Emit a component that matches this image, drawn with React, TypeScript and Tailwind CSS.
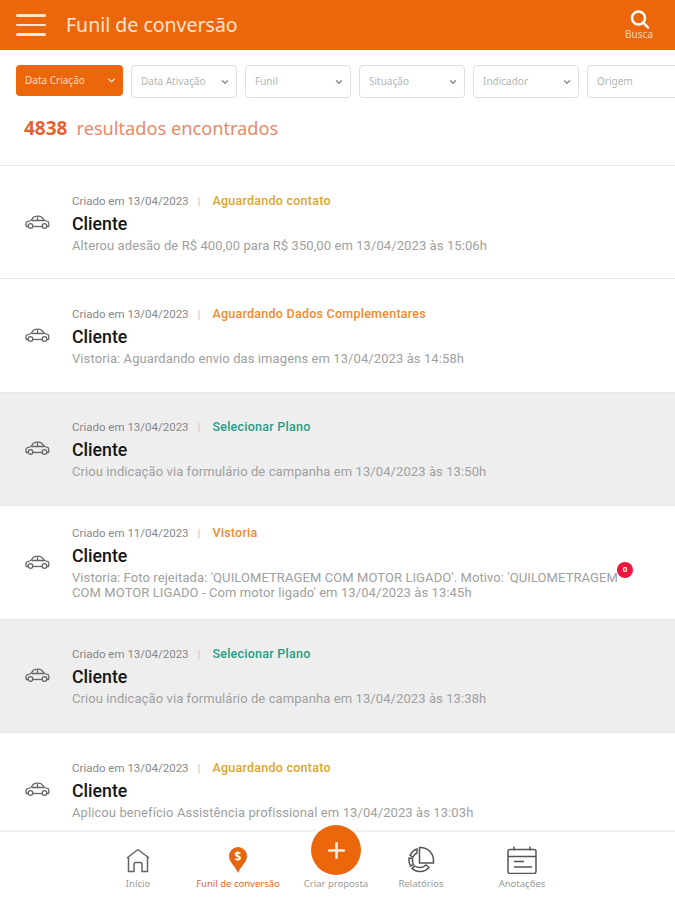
import type { ReactNode } from 'react';
import { ChevronDown, Plus } from 'lucide-react';

const ubuntu = "font-['Noto_Sans',sans-serif]";

interface Lead {
  date: string;
  status: string;
  statusClass: string;
  text: string;
  gray?: boolean;
  badge?: boolean;
}

const leads: Lead[] = [
  { date: '13/04/2023', status: 'Aguardando contato', statusClass: 'text-[#e0a526]', text: 'Alterou adesão de R$ 400,00 para R$ 350,00 em 13/04/2023 às 15:06h' },
  { date: '13/04/2023', status: 'Aguardando Dados Complementares', statusClass: 'text-[#f08a2c]', text: 'Vistoria: Aguardando envio das imagens em 13/04/2023 às 14:58h' },
  { date: '13/04/2023', status: 'Selecionar Plano', statusClass: 'text-[#1f9e86]', text: 'Criou indicação via formulário de campanha em 13/04/2023 às 13:50h', gray: true },
  { date: '11/04/2023', status: 'Vistoria', statusClass: 'text-[#f08a2c]', text: "Vistoria: Foto rejeitada: 'QUILOMETRAGEM COM MOTOR LIGADO'. Motivo: 'QUILOMETRAGEM COM MOTOR LIGADO - Com motor ligado' em 13/04/2023 às 13:45h", badge: true },
  { date: '13/04/2023', status: 'Selecionar Plano', statusClass: 'text-[#1f9e86]', text: 'Criou indicação via formulário de campanha em 13/04/2023 às 13:38h', gray: true },
  { date: '13/04/2023', status: 'Aguardando contato', statusClass: 'text-[#e0a526]', text: 'Aplicou benefício Assistência profissional em 13/04/2023 às 13:03h' },
];

const filters = ['Data Ativação', 'Funil', 'Situação', 'Indicador'];

function CarIcon() {
  return (
    <svg width="25" height="15" viewBox="0 0 25 15" fill="none" stroke="#666" strokeWidth="1.300">
      <path d="M3 11.500H1.500c-.8-1-.8-3.500.2-4.500L6 5.500 8.500 2c3-1 6-1 8 0l3 3.500 3.500 1c1 1 1 4 .5 5H22" />
      <path d="M8 11.500h9" />
      <path d="M7 5.500h12M12.500 2v3.500" />
      <circle cx="5.500" cy="11" r="2.300" />
      <circle cx="19.500" cy="11" r="2.300" />
    </svg>
  );
}

function LeadRow({ lead }: { lead: Lead }) {
  return (
    <div className={`relative h-[113.4px] flex items-center border-b border-[#e8e8e8] font-['Roboto',sans-serif] ${lead.gray ? 'bg-[#eeeeee]' : 'bg-white'}`}>
      <div className="w-[72px] shrink-0 pl-[25px]">
        <CarIcon />
      </div>
      <div className="flex-1 pr-[52px] pt-[1px]">
        <div className="flex items-center text-[11.500px] leading-[14px] pt-[1px]">
          <span className="text-[#888]">Criado em {lead.date}</span>
          <span className="ml-[9px] mr-[12px] text-[#c4c4c4]">|</span>
          <span className={`text-[12.500px] font-medium tracking-[0.25px] ${lead.statusClass}`}>{lead.status}</span>
        </div>
        <div className="text-[17.700px] leading-[22px] font-medium text-[#151515] mt-[5px]">Cliente</div>
        <div className="text-[13px] leading-[15px] text-[#a0a0a0] mt-[3px] tracking-[0.09px]">{lead.text}</div>
      </div>
      {lead.badge && (
        <div className="absolute left-[617px] top-[56px] w-[16px] h-[16px] rounded-full bg-[#f0153f] flex items-center justify-center text-[8px] font-bold text-white">0</div>
      )}
    </div>
  );
}

function NavItem({ label, active, icon, className }: { label: string; active?: boolean; icon: ReactNode; className?: string }) {
  return (
    <div className={`flex flex-col items-center w-[100px] ${className ?? ''}`}>
      <div className="h-[30px] flex items-center justify-center">{icon}</div>
      <span className={`text-[9.500px] mt-[3px] leading-[12px] whitespace-nowrap ${ubuntu} ${active ? 'text-[#e8662a]' : 'text-[#999]'}`}>{label}</span>
    </div>
  );
}

export default function App() {
  return (
    <div className="relative w-[675px] h-[900px] overflow-hidden bg-white">
      <header className="h-[50px] bg-[#ec670b] flex items-center pl-[16px] pr-[22px] text-white">
        <div className="flex flex-col gap-[7px] w-[30px]">
          <span className="h-[2.500px] bg-[#fde6d6] rounded" />
          <span className="h-[2.500px] bg-[#fde6d6] rounded" />
          <span className="h-[2.500px] bg-[#fde6d6] rounded" />
        </div>
        <h1 className={`ml-[20px] text-[19.500px] text-[#fde3d0] ${ubuntu}`}>Funil de conversão</h1>
        <div className="ml-auto self-start pt-[10px] flex flex-col items-center">
          <svg width="21" height="19" viewBox="0 0 21 19" fill="none" stroke="#fff" strokeWidth="2.500" strokeLinecap="round">
            <circle cx="9.500" cy="8" r="6.500" />
            <path d="M14.500 12.800 19 17.500" />
          </svg>
          <span className={`text-[10px] leading-[10px] text-[#fbd3b8] ${ubuntu}`}>Busca</span>
        </div>
      </header>

      <div className={`flex gap-[8px] pl-[16px] pt-[15px] ${ubuntu}`}>
        <div className="w-[107px] h-[31px] shrink-0 rounded-[4px] bg-[#ec670b] flex items-center justify-between pl-[9px] pr-[6px] text-[10px] text-[#fcd9c2]">
          Data Criação
          <ChevronDown size={11} strokeWidth={3} className="text-[#fde6d6]" />
        </div>
        {filters.map((f) => (
          <div key={f} className="w-[106px] h-[33px] shrink-0 rounded-[4px] border border-[#dcdfe3] flex items-center justify-between pl-[9px] pr-[6px] text-[10px] text-[#b5b5b5]">
            {f}
            <ChevronDown size={10} strokeWidth={3} className="text-[#888]" />
          </div>
        ))}
        <div className="w-[106px] h-[33px] shrink-0 rounded-[4px] border border-[#dcdfe3] flex items-center pl-[9px] text-[10px] text-[#b5b5b5]">Origem</div>
      </div>

      <div className={`h-[68px] flex items-start pl-[24px] pt-[18px] border-b border-[#e8e8e8] ${ubuntu}`}>
        <span className="text-[19px] leading-[24px] font-bold text-[#e2622f]">4838</span>
        <span className="ml-[9px] text-[18.200px] leading-[24px] text-[#e88a68]">resultados encontrados</span>
      </div>

      <div>
        {leads.map((lead, i) => (
          <LeadRow key={i} lead={lead} />
        ))}
      </div>

      <nav className="absolute left-0 right-0 bottom-0 h-[70px] bg-white border-t-2 border-[#f2f2f2] flex items-start pl-[88px] pt-[13px]">
        <NavItem
          label="Início"
          icon={
            <svg width="24" height="25" viewBox="0 0 24 25" fill="none" stroke="#666" strokeWidth="1.500">
              <path d="M12 1.500 23 10" />
              <path d="M1 10 12 1.500" />
              <path d="M2.500 9v14.500h5.500v-7a2 2 0 0 1 2-2h4a2 2 0 0 1 2 2v7h5.500V9" />
            </svg>
          }
        />
        <NavItem
          label="Funil de conversão"
          active
          icon={
            <svg width="20" height="28" viewBox="0 0 20 28">
              <path d="M10 1a9 9 0 0 1 9 9c0 6-5.500 9-9 17C6.500 19 1 16 1 10A9 9 0 0 1 10 1z" fill="#e8650f" />
              <text x="10" y="15" textAnchor="middle" fontSize="12" fontWeight="700" fill="#fff" fontFamily="Noto Sans, sans-serif">$</text>
            </svg>
          }
        />
        <div className="flex flex-col items-center w-[96px] -mt-[20px]">
          <div className="w-[50px] h-[50px] rounded-full bg-[#ec670b] flex items-center justify-center">
            <Plus size={25} strokeWidth={2.500} className="text-[#fdeee3]" />
          </div>
          <span className={`text-[9.500px] leading-[12px] mt-[3px] whitespace-nowrap text-[#999] ${ubuntu}`}>Criar proposta</span>
        </div>
        <NavItem
          label="Relatórios"
          className="-ml-[13px]"
          icon={
            <svg width="28" height="28" viewBox="0 0 28 28" fill="none" stroke="#555" strokeWidth="1.500">
              <path d="M12.500 1.500a13 13 0 0 1 14 13v2.500h-14z" />
              <path d="M10 3a12 12 0 0 0-7 6.500l3 1.500a9 9 0 0 1 4-4z" />
              <path d="M2 12a12 12 0 0 0 1.500 8l3-1.500a9 9 0 0 1-1-6z" />
              <path d="M5 22.500a12 12 0 0 0 17-1l-3-2.500a9 9 0 0 1-11.500 1z" />
            </svg>
          }
        />
        <NavItem
          label="Anotações"
          className="ml-[1px]"
          icon={
            <svg width="30" height="28" viewBox="0 0 30 28" fill="none" stroke="#555" strokeWidth="1.500">
              <rect x="1" y="3.500" width="28" height="24" rx="2" />
              <path d="M1 10.500h28M7 .500v4M23 .500v4" />
              <path d="M7 15.500h10M7 21h18" />
            </svg>
          }
        />
      </nav>
    </div>
  );
}
